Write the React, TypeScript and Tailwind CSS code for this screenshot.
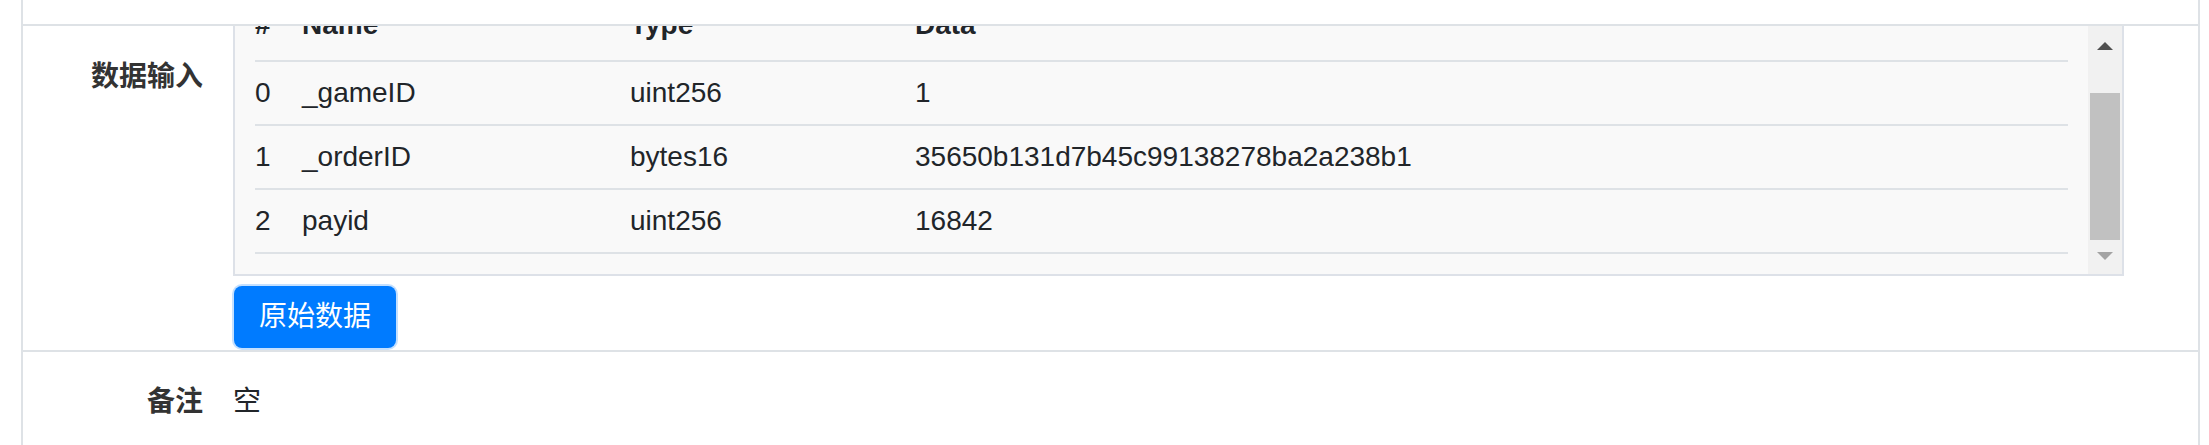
const font = { fontFamily: '"Liberation Sans", "Noto Sans CJK SC", sans-serif' }

type Param = { idx: number; name: string; type: string; data: string }

const params: Param[] = [
  { idx: 0, name: '_gameID', type: 'uint256', data: '1' },
  { idx: 1, name: '_orderID', type: 'bytes16', data: '35650b131d7b45c99138278ba2a238b1' },
  { idx: 2, name: 'payid', type: 'uint256', data: '16842' },
]

function Cells({ a, b, c, d }: { a: string; b: string; c: string; d: string }) {
  return (
    <>
      <div className="w-[47px] shrink-0">{a}</div>
      <div className="w-[328px] shrink-0">{b}</div>
      <div className="w-[285px] shrink-0">{c}</div>
      <div className="flex-1">{d}</div>
    </>
  )
}

function FakeScrollbar() {
  return (
    <div className="w-[34px] shrink-0 bg-[#f1f1f1] flex flex-col items-center">
      <div className="mt-[16px] w-0 h-0 border-x-[8px] border-x-transparent border-b-[8px] border-b-[#505050]" />
      <div className="mt-[43px] w-[30px] h-[147px] bg-[#c1c1c1]" />
      <div className="mt-[12px] w-0 h-0 border-x-[8px] border-x-transparent border-t-[8px] border-t-[#a3a3a3]" />
    </div>
  )
}

export default function App() {
  return (
    <div className="bg-white w-[2209px] h-[445px] overflow-hidden text-[#212529]" style={font}>
      <div className="ml-[21px] w-[2179px] border-x-2 border-[#dee2e6]">
        <div className="h-[24px]" />

        {/* 数据输入 */}
        <div className="flex border-t-2 border-[#dee2e6]">
          <div className="w-[210px] shrink-0 pr-[30px] pt-[30px] text-right text-[28px] leading-[42px] font-bold text-[#333]">
            数据输入
          </div>
          <div className="flex-1 pr-[74px]">
            <div className="flex h-[250px] border-x-2 border-b-2 border-[#dde1e8] bg-[#f9f9f9]">
              <div className="flex-1 overflow-hidden">
                {/* table scrolled to the bottom */}
                <div className="mt-[-26px] px-[20px] text-[28px] leading-[42px]">
                  <div className="flex items-end h-[62px] pb-[14px] border-b-2 border-[#dee2e6] font-bold">
                    <Cells a="#" b="Name" c="Type" d="Data" />
                  </div>
                  {params.map((p) => (
                    <div key={p.idx} className="flex items-center h-[64px] border-b-2 border-[#dee2e6]">
                      <Cells a={String(p.idx)} b={p.name} c={p.type} d={p.data} />
                    </div>
                  ))}
                </div>
              </div>
              <FakeScrollbar />
            </div>
            <button className="mt-[10px] mb-[2px] ml-[1px] h-[62px] w-[162px] rounded-lg bg-[#007bff] text-white text-[28px] ring-2 ring-[#c4e0ff]">
              原始数据
            </button>
          </div>
        </div>

        {/* 备注 */}
        <div className="flex h-[100px] border-t-2 border-[#dee2e6]">
          <div className="w-[210px] shrink-0 pr-[30px] pt-[29px] text-right text-[28px] leading-[42px] font-bold text-[#333]">
            备注
          </div>
          <div className="flex-1 pt-[29px] text-[28px] leading-[42px]">空</div>
        </div>
      </div>
    </div>
  )
}
